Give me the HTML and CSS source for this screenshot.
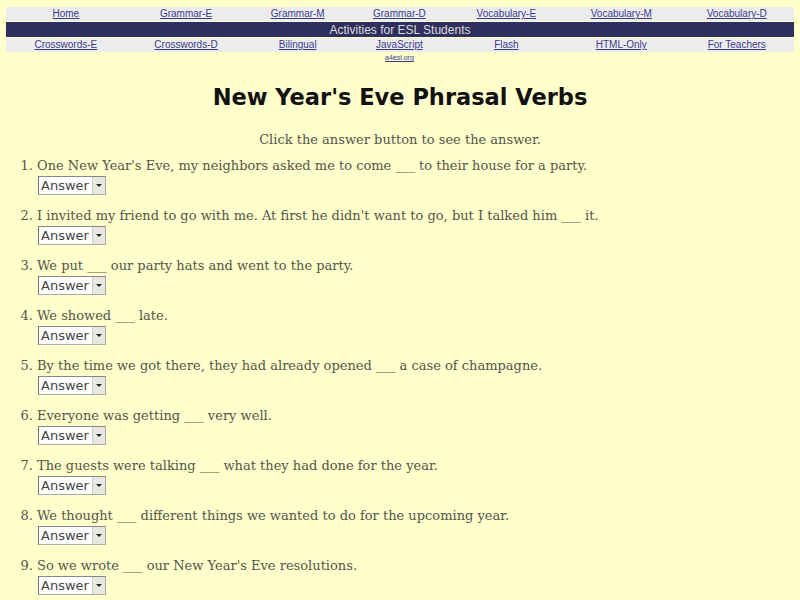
FILE: index.html
```html
<!DOCTYPE html>
<html lang="en">
<head>
    <meta charset="UTF-8">
    <title>New Year's Eve Phrasal Verbs</title>
    <link rel="stylesheet" href="styles.css">
</head>
<body>
    <table class="nav">
        <tr class="nav-row">
            <td><a href="#">Home</a></td>
            <td><a href="#">Grammar-E</a></td>
            <td><a href="#">Grammar-M</a></td>
            <td><a href="#">Grammar-D</a></td>
            <td><a href="#">Vocabulary-E</a></td>
            <td><a href="#">Vocabulary-M</a></td>
            <td><a href="#">Vocabulary-D</a></td>
        </tr>
        <tr class="nav-title">
            <td colspan="7">Activities for ESL Students</td>
        </tr>
        <tr class="nav-row">
            <td><a href="#">Crosswords-E</a></td>
            <td><a href="#">Crosswords-D</a></td>
            <td><a href="#">Bilingual</a></td>
            <td><a href="#">JavaScript</a></td>
            <td><a href="#">Flash</a></td>
            <td><a href="#">HTML-Only</a></td>
            <td><a href="#">For Teachers</a></td>
        </tr>
        <tr class="nav-foot">
            <td></td><td></td><td></td>
            <td><a href="#">a4esl.org</a></td>
            <td></td><td></td><td></td>
        </tr>
    </table>

    <h1>New Year's Eve Phrasal Verbs</h1>
    <p class="intro">Click the answer button to see the answer.</p>

    <ol class="quiz">
        <li>One New Year's Eve, my neighbors asked me to come ___ to their house for a party.
            <span class="answer"><select><option>Answer</option><option>over</option></select><span class="arrow"></span></span></li>
        <li>I invited my friend to go with me. At first he didn't want to go, but I talked him ___ it.
            <span class="answer"><select><option>Answer</option><option>into</option></select><span class="arrow"></span></span></li>
        <li>We put ___ our party hats and went to the party.
            <span class="answer"><select><option>Answer</option><option>on</option></select><span class="arrow"></span></span></li>
        <li>We showed ___ late.
            <span class="answer"><select><option>Answer</option><option>up</option></select><span class="arrow"></span></span></li>
        <li>By the time we got there, they had already opened ___ a case of champagne.
            <span class="answer"><select><option>Answer</option><option>up</option></select><span class="arrow"></span></span></li>
        <li>Everyone was getting ___ very well.
            <span class="answer"><select><option>Answer</option><option>along</option></select><span class="arrow"></span></span></li>
        <li>The guests were talking ___ what they had done for the year.
            <span class="answer"><select><option>Answer</option><option>about</option></select><span class="arrow"></span></span></li>
        <li>We thought ___ different things we wanted to do for the upcoming year.
            <span class="answer"><select><option>Answer</option><option>about</option></select><span class="arrow"></span></span></li>
        <li>So we wrote ___ our New Year's Eve resolutions.
            <span class="answer"><select><option>Answer</option><option>down</option></select><span class="arrow"></span></span></li>
    </ol>
</body>
</html>
```

FILE: styles.css
```css
body {
    margin: 7px 6px;
    background-color: #ffffcc;
    font-family: "DejaVu Serif", serif;
    color: #55554a;
}

/* top menu */
.nav {
    width: 100%;
    border-collapse: collapse;
    font-family: "Liberation Sans", Arial, sans-serif;
    font-size: 10px;
    line-height: 14px;
}
.nav td {
    padding: 0;
    text-align: center;
}
.nav a {
    color: #3b3b8c;
}
.nav-row td {
    background-color: #ececec;
    height: 14px;
}
.nav-title td {
    background-color: #2f2f5f;
    color: #dcdcdc;
    font-size: 12px;
    height: 15px;
    border-top: 1px solid #ffffcc;
    border-bottom: 1px solid #ffffcc;
}
.nav-foot td {
    font-size: 7px;
    line-height: 9px;
    vertical-align: top;
    padding-top: 1px;
}

h1 {
    margin: 22px 0 0;
    text-align: center;
    font-family: "DejaVu Sans", sans-serif;
    font-size: 22.5px;
    color: #111;
}
.intro {
    margin: 22px 0 0;
    text-align: center;
    font-size: 13px;
}

/* questions */
.quiz {
    margin: 9px 0 0;
    padding-left: 31px;
    font-size: 13px;
    line-height: 20px;
}
.quiz li {
    margin-bottom: 11px;
}
.answer {
    display: flex;
    width: 66px;
    height: 17px;
    margin-left: 1px;
    border: 1px solid #aaa;
    border-left-color: #777;
    border-top-color: #888;
    background: #fff;
}
.answer select {
    appearance: none;
    -webkit-appearance: none;
    border: none;
    background: transparent;
    padding: 0 0 0 2px;
    width: 54px;
    height: 17px;
    font-family: "DejaVu Sans", sans-serif;
    font-size: 13px;
    color: #444;
    outline: none;
}
.arrow {
    width: 12px;
    background: #e8e8e0;
    border-left: 1px solid #ccc;
    display: flex;
    align-items: center;
    justify-content: center;
}
.arrow::after {
    content: "";
    border-left: 3px solid transparent;
    border-right: 3px solid transparent;
    border-top: 3px solid #222;
}
```
